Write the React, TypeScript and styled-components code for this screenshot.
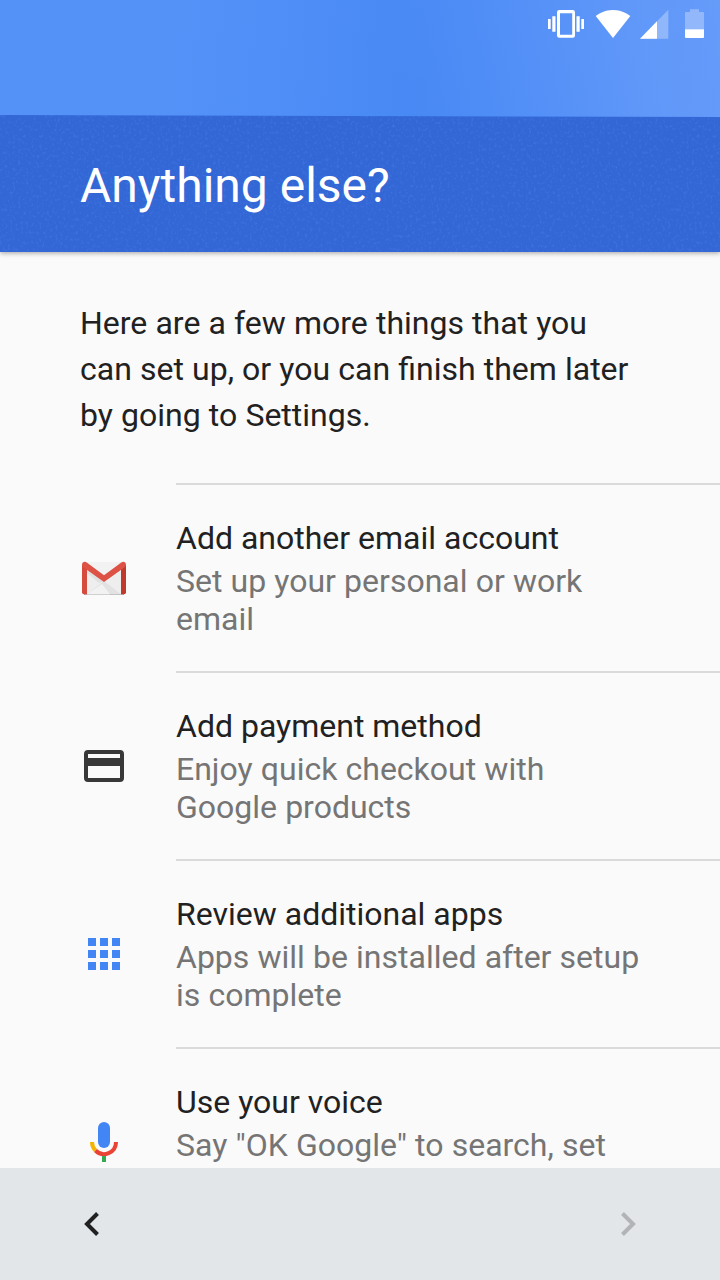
import React from 'react';
import styled, { createGlobalStyle } from 'styled-components';

const GlobalStyle = createGlobalStyle`
  body {
    margin: 0;
    background: #fafafa;
    font-family: Roboto, sans-serif;
  }
`;

const Screen = styled.div`
  width: 720px;
  height: 1280px;
  display: flex;
  flex-direction: column;
  overflow: hidden;
  background: #fafafa;
`;

const Header = styled.header`
  flex: none;
  position: relative;
  z-index: 1;
  display: flex;
  flex-direction: column;
  height: 252px;
  background:
    linear-gradient(78deg, rgba(71, 136, 244, 0) 56%, #5490f7 74%, #6098f9 88%, #659bf9 100%),
    linear-gradient(96deg, #5592f8 0%, #5492f8 24%, #4f8ef7 40%, #4788f4 58%, #4788f4 100%);
  box-shadow: 0 1px 5px rgba(0, 0, 0, 0.36);
`;

const StatusBar = styled.div`
  height: 115px;
  box-sizing: border-box;
  padding: 8px 15px 0 0;
  display: flex;
  justify-content: flex-end;
  align-items: flex-start;

  svg {
    display: block;
    flex: none;
  }
`;

const TitleBand = styled.div`
  position: relative;
  flex: 1;
  display: flex;
  align-items: flex-start;
  padding: 43px 80px 0;
`;

const Texture = styled.svg`
  position: absolute;
  inset: 0;
  width: 720px;
  height: 137px;
`;

const Title = styled.h1`
  position: relative;
  margin: 0;
  font-size: 48px;
  line-height: 56px;
  font-weight: 400;
  color: #fff;
  white-space: nowrap;
`;

const Content = styled.main`
  flex: 1;
  min-height: 0;
  overflow: hidden;
`;

const Intro = styled.p`
  margin: 0;
  padding: 48px 80px 45px;
  font-size: 32px;
  line-height: 46px;
  word-spacing: 0.2px;
  color: #212121;
`;

const Row = styled.section`
  display: flex;
  align-items: center;
  height: 188px;
  padding-left: 80px;
`;

const RowIcon = styled.div`
  flex: none;
  width: 96px;
  padding-top: 2px;

  svg {
    display: block;
  }
`;

const RowBody = styled.div`
  flex: 1;
  box-sizing: border-box;
  height: 188px;
  padding: 34px 80px 0 0;
  border-top: 2px solid #dadada;
`;

const RowTitle = styled.div`
  font-size: 32px;
  line-height: 38px;
  color: #212121;
`;

const RowText = styled.div`
  margin-top: 5px;
  font-size: 32px;
  line-height: 38px;
  word-spacing: 0.2px;
  color: #757575;
`;

const NavBar = styled.footer`
  flex: none;
  height: 112px;
  box-sizing: border-box;
  padding: 0 68px;
  display: flex;
  justify-content: space-between;
  align-items: center;
  background: #e2e6e9;
`;

const NavButton = styled.button`
  display: block;
  width: 48px;
  height: 48px;
  padding: 0;
  border: 0;
  background: none;
  color: ${(p) => (p.disabled ? '#b1b3b5' : '#212121')};

  svg {
    display: block;
  }
`;

const VibrateIcon = () => (
  <svg width="40" height="32" viewBox="546 8 40 32" fill="#fff">
    <path d="M548 19h2.700v10H548zM552.300 16.300h3.200v15.400h-3.200zM576.500 16.300h3.200v15.400h-3.200zM581.300 19h2.700v10h-2.700z" />
    <path
      fillRule="evenodd"
      d="M559.300 10h13.400a2.300 2.300 0 0 1 2.300 2.300v23.200a2.300 2.300 0 0 1-2.300 2.300h-13.400a2.300 2.300 0 0 1-2.300-2.300V12.300a2.300 2.300 0 0 1 2.300-2.300zM560 13.200v21.500h12.200V13.200z"
    />
  </svg>
);

const WifiIcon = () => (
  <svg width="50" height="32" viewBox="586 8 50 32" fill="#fff">
    <path d="M613 38 595.700 16.100C597 15 603 10 613 10s16 5 17.300 6.100z" />
  </svg>
);

const SignalIcon = () => (
  <svg width="40" height="32" viewBox="636 8 40 32" fill="#fff">
    <path opacity=".3" d="M640 38.700h28.300V9.700z" />
    <path d="M640 38.700h17V21.300z" />
  </svg>
);

const BatteryIcon = () => (
  <svg width="29" height="32" viewBox="676 8 29 32" fill="#fff">
    <path opacity=".3" d="M685 29.300V13q0-1 1-1h4V9.300h9V12h4q1 0 1 1v16.300z" />
    <path d="M685 29.300h19V37q0 1-1 1h-17q-1 0-1-1z" />
  </svg>
);

const GmailIcon = () => (
  <svg width="48" height="48" viewBox="0 0 48 48">
    <path d="M4 40.500h40" stroke="#a9a9a9" strokeWidth="1" />
    <path fill="#eeeeee" d="M5 8h38v32.300H5z" />
    <path fill="#e0e0e0" d="M7 14v5l12 10 5-2z" />
    <path fill="#e2e2e2" d="M24 27 7 40.300h34z" />
    <path fill="#f2f2f2" d="M7 40.300 22 30l8 10.300z" />
    <path fill="#f2f2f2" d="M6 8h36L24 22z" />
    <path fill="#d54b3d" d="M2 11h5v29.300H4a2 2 0 0 1-2-2z" />
    <path fill="#c0392b" d="M41 11h5v27.300a2 2 0 0 1-2 2h-3z" />
    <path fill="#de5145" d="M2 11c0-2.800 2.600-4 4.700-2.500L24 21.300 41.300 8.500C43.400 7 46 8.200 46 11c0 1-.5 1.700-1.300 2.300L24 28 3.300 13.300C2.500 12.700 2 12 2 11z" />
  </svg>
);

const CardIcon = () => (
  <svg width="48" height="48" viewBox="0 0 48 48">
    <path
      fill="#383838"
      fillRule="evenodd"
      d="M8 8h32a4 4 0 0 1 4 4v24a4 4 0 0 1-4 4H8a4 4 0 0 1-4-4V12a4 4 0 0 1 4-4zm0 4v4h32v-4zm0 12v12h32V24z"
    />
  </svg>
);

const AppsIcon = () => (
  <svg width="48" height="48" viewBox="0 0 48 48">
    <path
      fill="#4285f4"
      d="M8 8h8v8H8zM20 8h8v8h-8zM32 8h8v8h-8zM8 20h8v8H8zM20 20h8v8h-8zM32 20h8v8h-8zM8 32h8v8H8zM20 32h8v8h-8zM32 32h8v8h-8z"
    />
  </svg>
);

const MicIcon = () => (
  <svg width="48" height="48" viewBox="0 0 48 48" fill="none" strokeWidth="4">
    <rect x="18" y="4" width="12" height="26" rx="6" fill="#4285f4" />
    <path stroke="#f4b400" d="M12 24c0 3.300 1.300 6.300 3.500 8.500" />
    <path stroke="#ea4335" d="M15.500 32.500A12 12 0 0 0 36 24" />
    <path stroke="#34a853" d="M24 38v6" />
  </svg>
);

const items = [
  { title: 'Add another email account', text: 'Set up your personal or work email', Icon: GmailIcon },
  { title: 'Add payment method', text: 'Enjoy quick checkout with Google products', Icon: CardIcon },
  { title: 'Review additional apps', text: 'Apps will be installed after setup is complete', Icon: AppsIcon },
  { title: 'Use your voice', text: 'Say "OK Google" to search, set', Icon: MicIcon },
];

export default function App() {
  return (
    <Screen>
      <GlobalStyle />
      <Header>
        <StatusBar>
          <VibrateIcon />
          <WifiIcon />
          <SignalIcon />
          <BatteryIcon />
        </StatusBar>
        <TitleBand>
          <Texture viewBox="0 0 720 137" aria-hidden="true">
            <defs>
              <filter id="grain" x="0" y="0" width="100%" height="100%" colorInterpolationFilters="sRGB">
                <feTurbulence type="fractalNoise" baseFrequency="0.38 0.3" numOctaves="3" seed="8" />
                <feColorMatrix values="0 0 0 0 0.3  0 0 0 0 0.52  0 0 0 0 0.92  1.2 0 0 0 -0.63" />
                <feComposite in2="SourceGraphic" operator="in" />
              </filter>
            </defs>
            <path fill="#3367d6" d="M0 0 720 2v135H0z" />
            <path fill="#3367d6" d="M0 0 720 2v135H0z" filter="url(#grain)" />
          </Texture>
          <Title>Anything else?</Title>
        </TitleBand>
      </Header>
      <Content>
        <Intro>Here are a few more things that you can set up, or you can finish them later by going to Settings.</Intro>
        {items.map(({ title, text, Icon }) => (
          <Row key={title}>
            <RowIcon>
              <Icon />
            </RowIcon>
            <RowBody>
              <RowTitle>{title}</RowTitle>
              <RowText>{text}</RowText>
            </RowBody>
          </Row>
        ))}
      </Content>
      <NavBar>
        <NavButton aria-label="Back">
          <svg width="48" height="48" viewBox="0 0 48 48" fill="none" stroke="currentColor" strokeWidth="4">
            <path d="M29.500 13.500 19 24l10.500 10.500" />
          </svg>
        </NavButton>
        <NavButton aria-label="Next" disabled>
          <svg width="48" height="48" viewBox="0 0 48 48" fill="none" stroke="currentColor" strokeWidth="4">
            <path d="M18.500 13.500 29 24 18.500 34.500" />
          </svg>
        </NavButton>
      </NavBar>
    </Screen>
  );
}
